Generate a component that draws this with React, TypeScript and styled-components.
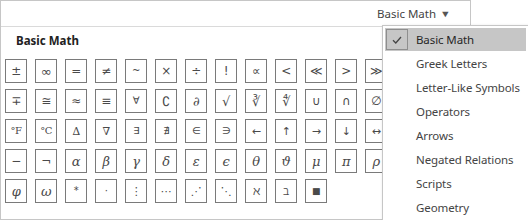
import React from 'react'
import styled, { createGlobalStyle } from 'styled-components'

const GlobalStyle = createGlobalStyle`
    html, body {
        margin:0;
        padding:0;
        background:#ffffff;
    }
    body {
        font-family:"Noto Sans", "Open Sans", sans-serif;
    }
`;

const Page = styled.div`
    width:528px;
    height:220px;
    position:relative;
    overflow:hidden;
    background:#ffffff;
`;
const Panel = styled.div`
    width:527px;
    height:219px;
    border-left:1px solid #c6c6c6;
    border-bottom:1px solid #c6c6c6;
    display:flex;
    flex-direction:column;
`;
const Header = styled.div`
    width:470px;
    height:27px;
    box-sizing:border-box;
    border-top:1px solid #c6c6c6;
    border-right:1px solid #c6c6c6;
    border-bottom:1px solid #dadada;
    display:flex;
    align-items:center;
    justify-content:flex-end;
    padding-right:20px;
`;
const HeaderLabel = styled.span`
    font-size:11.5px;
    color:#444;
    display:flex;
    align-items:center;
    gap:5px;
    margin-top:-1px;
    white-space:nowrap;
`;
const Caret = styled.span`
    font-size:9px;
    color:#555;
    transform:scaleX(1.2);
`;
const Title = styled.div`
    font-size:11.5px;
    font-weight:700;
    color:#222;
    padding:6px 0 0 15px;
    height:26px;
    box-sizing:border-box;
    white-space:nowrap;
`;
const Grid = styled.div`
    display:grid;
    grid-template-columns:repeat(13, 22px);
    grid-auto-rows:24px;
    column-gap:8px;
    row-gap:6px;
    padding:6px 0 0 4px;
`;
const Cell = styled.div<{ $serif?: boolean; $italic?: boolean; $size?: number }>`
    width:22px;
    height:24px;
    box-sizing:border-box;
    border:1px solid #7a7a7a;
    display:flex;
    align-items:center;
    justify-content:center;
    color:#4a4a4a;
    font-family:${p => p.$serif ? '"DejaVu Serif", "Liberation Serif", serif' : '"DejaVu Sans", "Noto Sans", sans-serif'};
    font-style:${p => p.$italic ? 'italic' : 'normal'};
    font-size:${p => p.$size ?? 12}px;
    line-height:1;
    white-space:nowrap;
    letter-spacing:-0.5px;
`;
const Menu = styled.div`
    position:absolute;
    left:382px;
    top:25px;
    width:150px;
    height:210px;
    background:#ffffff;
    border:1px solid #c6c6c6;
    box-shadow:1px 1px 3px rgba(0,0,0,0.18);
    padding:2px 2px;
    box-sizing:border-box;
`;
const MenuItem = styled.div<{ $active?: boolean }>`
    height:23px;
    margin-bottom:1px;
    display:flex;
    align-items:center;
    background:${p => p.$active ? '#c6c6c6' : 'transparent'};
    font-size:11.5px;
    letter-spacing:-0.1px;
    color:${p => p.$active ? '#262626' : '#444'};
    width:141px;
    white-space:nowrap;
`;
const Check = styled.span<{ $on?: boolean }>`
    flex:none;
    width:22px;
    height:21px;
    box-sizing:border-box;
    margin-left:1px;
    border:1px solid ${p => p.$on ? '#8e8e8e' : 'transparent'};
    display:flex;
    align-items:center;
    justify-content:center;
    margin-right:8px;
`;

type Sym = { t: string; serif?: boolean; italic?: boolean; size?: number };

const s = (t: string, size?: number): Sym => ({ t, size });
const r = (t: string, size?: number): Sym => ({ t, serif: true, size });
const g = (t: string): Sym => ({ t, serif: true, italic: true, size: 13 });

// only the columns left of the open menu are drawn
const symbols: Sym[][] = [
    [s('±'), s('∞', 13), s('='), s('≠'), s('~', 10), s('×'), s('÷'), s('!'), s('∝'), s('<'), s('≪'), s('>'), s('≫')],
    [s('∓'), s('≅'), s('≈'), s('≡'), s('∀', 10), r('∁', 13), g('∂'), s('√', 13), s('∛', 13), s('∜', 13), s('∪'), s('∩'), s('∅')],
    [r('°F', 10), r('°C', 10), r('∆', 11), r('∇', 11), s('∃', 10), s('∄', 10), s('∈', 10), s('∋', 10), s('←', 11), s('↑', 11), s('→', 11), s('↓', 11), s('↔', 11)],
    [s('−'), s('¬'), g('α'), g('β'), g('γ'), g('δ'), g('ε'), g('ϵ'), g('θ'), g('ϑ'), g('μ'), g('π'), g('ρ')],
    [g('φ'), g('ω'), s('*', 10), s('·', 10), s('⋮', 11), s('⋯', 11), s('⋰', 11), s('⋱', 11), r('ℵ', 12), r('ℶ', 12), s('■', 9)],
];

const menuItems = ['Basic Math', 'Greek Letters', 'Letter-Like Symbols', 'Operators', 'Arrows', 'Negated Relations', 'Scripts', 'Geometry'];

const App: React.FC = () => {
    return (
        <Page>
            <GlobalStyle />
            <Panel>
                <Header>
                    <HeaderLabel>Basic Math <Caret>▼</Caret></HeaderLabel>
                </Header>
                <Title>Basic Math</Title>
                <Grid>
                    {symbols.flatMap((row, ri) => row.map((c, ci) => (
                        <Cell key={ri + '-' + ci} $serif={c.serif} $italic={c.italic} $size={c.size}
                            style={{ gridRow: ri + 1 }}>
                            {c.t}
                        </Cell>
                    )))}
                </Grid>
            </Panel>
            <Menu>
                {menuItems.map((m, i) => (
                    <MenuItem key={m} $active={i === 0}>
                        <Check $on={i === 0}>
                            {i === 0 && (
                                <svg width="10" height="8" viewBox="0 0 10 8">
                                    <path d="M1 4.2 L3.8 7 L9 1" fill="none" stroke="#444" strokeWidth="1.3" />
                                </svg>
                            )}
                        </Check>
                        {m}
                    </MenuItem>
                ))}
            </Menu>
        </Page>
    )
}

export default App
